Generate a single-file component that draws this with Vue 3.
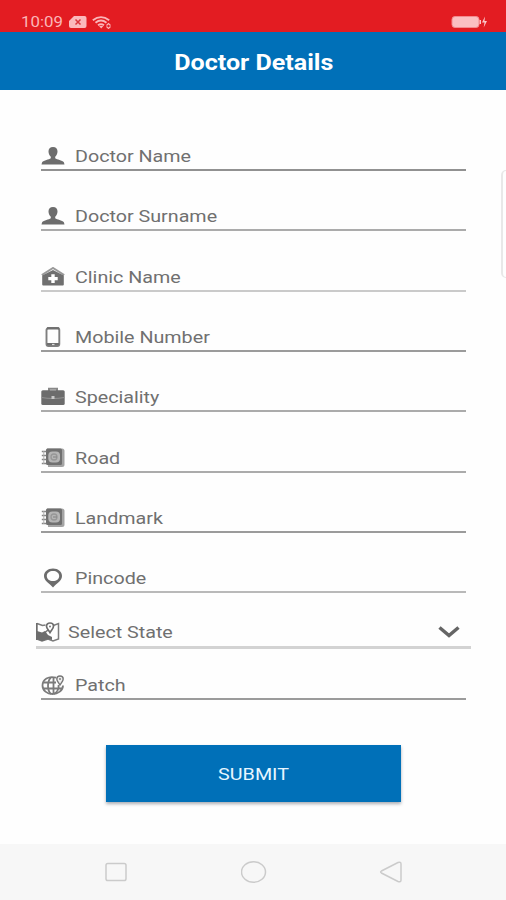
<script setup>
const fields = [
  { label: 'Doctor Name', icon: 'person', line: 'dark' },
  { label: 'Doctor Surname', icon: 'person', line: 'mid' },
  { label: 'Clinic Name', icon: 'clinic', line: 'light' },
  { label: 'Mobile Number', icon: 'phone', line: 'thin' },
  { label: 'Speciality', icon: 'case', line: 'mid' },
  { label: 'Road', icon: 'book', line: 'mid' },
  { label: 'Landmark', icon: 'book', line: 'thin' },
  { label: 'Pincode', icon: 'pin', line: 'soft' },
  { label: 'Select State', icon: 'map', line: 'wide', select: true },
  { label: 'Patch', icon: 'globe', line: 'thin' },
]
</script>

<template>
  <div class="screen">
    <div class="status">
      <div class="status-left">
        <span class="clock"><span class="stretch">10:09</span></span>
        <svg class="sim" viewBox="0 0 18 12"><path d="M5 0H15.500Q17.500 0 17.500 2V10Q17.500 12 15.500 12H2Q0 12 0 10V5Z" fill="#fbb9bc" /><path d="M6.500 3.500l5 5M11.500 3.500l-5 5" stroke="#d9353b" stroke-width="1.500" /></svg>
        <svg class="wifi" viewBox="0 0 20 13" fill="none" stroke="#fbb5b8" stroke-width="1.900"><path d="M.8 4.200Q9 -2 17.200 4.200M3.500 6.800Q9 2.400 14.500 6.800M6 9.200Q9 7 12 9.200" /><path d="M8 10.300h2.400l-1.200 1.400zM14.500 9.500l2-2 2 2M14.500 10.500l2 2 2-2" stroke-width="1.100" /></svg>
      </div>
      <svg class="battery" viewBox="0 0 38 14"><rect x="1" y="1.500" width="27" height="11" rx="3" fill="#fbbfc2" stroke="#f38a8e" /><path d="M28.500 5h1.500v4h-1.500zM34 1.500l-3 6h2.500l-.8 5 3.300-6.500h-2.500z" fill="#fbc6c8" /></svg>
    </div>

    <header class="bar"><h1 class="title">Doctor Details</h1></header>

    <main class="body">
      <form class="form" @submit.prevent>
        <div v-for="f in fields" :key="f.label" class="field" :class="[f.line, { select: f.select }]">
          <svg v-if="f.icon === 'person'" class="icon" viewBox="0 0 24 20" fill="#6d6d6d">
            <path d="M12 1C9 1 7.400 2.800 7.500 5.600c0 2.200 1 4.200 2.300 5.100v1.500C8 13.700 2.800 14 1.100 16.200L.5 18.500h23l-.6-2.300c-1.700-2.200-6.900-2.500-8.700-4v-1.500c1.300-.9 2.300-2.900 2.300-5.100C16.600 2.800 15 1 12 1z" />
          </svg>
          <svg v-else-if="f.icon === 'clinic'" class="icon" viewBox="0 0 24 20">
            <path d="M.8 8L12 1l11.200 7" fill="none" stroke="#999" stroke-width="2" />
            <path d="M1.200 8.500L12 3l10.800 5.500v9q0 1-1 1H2.200q-1 0-1-1z" fill="#6f6f6f" />
            <path d="M10.300 7.200h3.400v2.800h3v3.200h-3v2.800h-3.400v-2.800h-3V10h3z" fill="#fff" />
          </svg>
          <svg v-else-if="f.icon === 'phone'" class="icon" viewBox="0 0 24 20">
            <rect x="5.500" y="1" width="12.800" height="18" rx="2" fill="none" stroke="#7f7f7f" stroke-width="1.900" />
            <path d="M6 1.400h12M6 17.200h12" stroke="#6f6f6f" stroke-width="2.200" />
            <path d="M11 17.500h2.500" stroke="#ddd" stroke-width="1.200" />
          </svg>
          <svg v-else-if="f.icon === 'case'" class="icon" viewBox="0 0 24 20">
            <path d="M8 4V1.700h8V4" fill="none" stroke="#888" stroke-width="2" />
            <rect x=".3" y="3.200" width="23.400" height="14.800" rx="1.500" fill="#6c6c6c" />
            <path d="M.5 10.500q11.500 2 23 0" fill="none" stroke="#929292" stroke-width="1.200" />
            <rect x="10.500" y="9" width="3" height="3" fill="#c8c8c8" />
          </svg>
          <svg v-else-if="f.icon === 'book'" class="icon" viewBox="0 0 24 20">
            <path d="M6 .5h15q2.500 0 2.500 2.500v13.500q0 2.500-2.500 2.500H7z" fill="#a4a4a4" />
            <rect x="5" y=".5" width="16" height="16.500" rx="1.500" fill="#707070" />
            <rect x="7.300" y="3.500" width="11.700" height="11" rx="4" fill="#b5b5b5" />
            <circle cx="13" cy="9" r="3" fill="none" stroke="#979797" stroke-width="1.300" />
            <path d="M12 9h4" stroke="#8a8a8a" stroke-width="1.200" />
            <path d="M.8 3.500h4.500M.8 7.500h4.500M.8 11.500h4.500M.8 15.500h4.500" stroke="#858585" stroke-width="1.700" />
            <path d="M2.800 3v13" stroke="#b0b0b0" stroke-width="1" />
          </svg>
          <svg v-else-if="f.icon === 'pin'" class="icon" viewBox="0 0 24 20">
            <path fill-rule="evenodd" d="M12 .5c5.200 0 9 3.300 9 7.500 0 5-5.300 7.200-9 11.500C8.300 15.200 3 13 3 8 3 3.800 6.800.5 12 .5zm0 2.500C8.500 3 5.800 5 5.800 8s2.700 5 6.200 5 6.200-2 6.200-5S15.500 3 12 3z" fill="#6c6c6c" />
          </svg>
          <svg v-else-if="f.icon === 'map'" class="icon" viewBox="0 0 24 20">
            <path d="M1 1.500l5.500 2 3-.5M18 3.200l4.500-1.700v15.500l-5.500 2-5-2-6 2-5-2z" fill="none" stroke="#7c7c7c" stroke-width="1.500" />
            <path d="M.8 1v17" stroke="#6d6d6d" stroke-width="1.800" />
            <path d="M1 9l5 1.500 3-1.500 3 4 4 2v3l-4-1-6 2.300-5-2.300z" fill="#6d6d6d" />
            <path d="M14 10.500C12.500 8 10.500 6.500 10.500 4.300c0-2 1.400-3.300 3.500-3.300s3.500 1.300 3.500 3.300c0 2.200-2 3.700-3.500 6.200z" fill="#fff" stroke="#6d6d6d" stroke-width="1.700" />
            <circle cx="14" cy="4.400" r="1" fill="#777" />
          </svg>
          <svg v-else class="icon" viewBox="0 0 24 20">
            <g fill="none" stroke="#7b7b7b" stroke-width="1.800">
              <path d="M15 2.700C7.500 .5 1.500 4.500 1.500 10.500c0 5 4.500 8.500 10 8.500s10.500-3.500 10.500-8.500" />
              <path d="M10 2.500C6 6 6 15.500 10 19M12.500 2.500v16.500M13 19c4-2.500 5-6 4.500-9M2 7.500h13M2 13.500h19" />
            </g>
            <path d="M19 10c-1.500-2.500-3.200-4-3.200-6 0-1.900 1.300-3 3.200-3s3.200 1.100 3.200 3c0 2-1.700 3.500-3.200 6z" fill="#eee" stroke="#777" stroke-width="1.400" />
            <circle cx="19" cy="4" r=".9" fill="#777" />
          </svg>
          <span class="label stretch">{{ f.label }}</span>
          <svg v-if="f.select" class="chevron" viewBox="0 0 22 12"><path d="M1.500 1.500L11 9.500l9.500-8" fill="none" stroke="#656565" stroke-width="3.500" /></svg>
        </div>
        <button class="submit"><span class="submit-text">SUBMIT</span></button>
      </form>
      <div class="edge-handle"></div>
    </main>

    <nav class="nav">
      <svg viewBox="0 0 26 24"><rect x="3" y="3.500" width="20" height="17" rx="1.800" /></svg>
      <svg viewBox="0 0 26 24"><ellipse cx="12.500" cy="12" rx="12" ry="10.300" /></svg>
      <svg viewBox="0 0 26 24"><path d="M3.400 11L20 2.500q3-1 3 1.500v16q0 2.500-3 1.500L3.400 13q-1.500-1 0-2z" /></svg>
    </nav>
  </div>
</template>

<style>
body { margin: 0; background: #fff; }
</style>

<style scoped>
.screen { width: 506px; height: 900px; display: flex; flex-direction: column; overflow: hidden; background: #fefefe; font-family: Roboto, sans-serif; }
.stretch { transform-origin: left center; transform: scaleX(1.159); }
.status { height: 32px; box-sizing: border-box; padding: 14px 17px 0 21px; background: #e31c22; display: flex; justify-content: space-between; }
.status-left { display: flex; height: 18px; align-items: center; }
.clock { width: 48px; color: #fbb6b8; font-size: 14.500px; line-height: 18px; }
.clock .stretch { display: inline-block; }
.sim { width: 18px; height: 12px; margin-top: -2px; }
.wifi { width: 20px; height: 13px; margin: -2px 0 0 5px; }
.battery { width: 38px; height: 14px; margin-top: 1px; }
.bar { height: 58px; box-sizing: border-box; padding: 4px 0 0 2px; background: #0070b8; display: flex; align-items: center; justify-content: center; }
.title { margin: 0; color: #fff; font-size: 22px; line-height: 28px; font-weight: 700; transform: scaleX(1.14); }
.body { height: 754px; display: flex; justify-content: space-between; align-items: flex-start; }
.form { width: 425px; padding-left: 41px; display: grid; grid-template-rows: 81px 60px 61px 60px 60px 61px 60px 60px 56px 51px 102px; }
.field { display: flex; align-items: flex-end; box-sizing: border-box; padding-bottom: 4px; background: linear-gradient(#9b9b9b, #9b9b9b) left bottom / 100% 2px no-repeat; }
.dark { background-image: linear-gradient(#919191, #919191); }
.mid { background-image: linear-gradient(#ababab, #ababab); }
.light { background-image: linear-gradient(#cacaca, #cacaca); }
.soft { background-image: linear-gradient(#b9b9b9, #b9b9b9); }
.wide { background-image: linear-gradient(#d3d3d3, #d3d3d3); background-size: 100% 3px; }
.icon { width: 24px; height: 20px; flex: none; margin-bottom: 1px; }
.label { margin: 0 0 1px 10px; color: #707070; font-size: 17px; line-height: 20px; white-space: nowrap; }
.select { margin: 0 -5px; padding-bottom: 6px; }
.select .label { margin-left: 8px; }
.chevron { width: 22px; height: 12px; margin: 0 11px 5px auto; }
.submit { align-self: end; justify-self: start; margin-left: 65px; width: 295px; height: 57px; border: 0; padding: 1px 0 0; background: #0070b8; color: #e8f6ff; font: 500 17px/56px Roboto, sans-serif; box-shadow: 0 2px 3px rgba(40, 45, 60, .38); }
.submit-text { display: inline-block; font-weight: 400; transform: scaleX(1.16); }
.edge-handle { width: 3px; height: 106px; margin-top: 80px; border: 1px solid #e8e8e8; border-left-width: 2px; border-right: 0; border-radius: 5px 0 0 5px; box-sizing: content-box; flex: none; }
.nav { height: 56px; flex: none; background: #f7f7f7; display: flex; align-items: center; justify-content: space-between; padding: 0 102px 0 103px; }
.nav svg { width: 26px; height: 24px; fill: none; stroke: #cbcbcb; stroke-width: 1.500; }
</style>
